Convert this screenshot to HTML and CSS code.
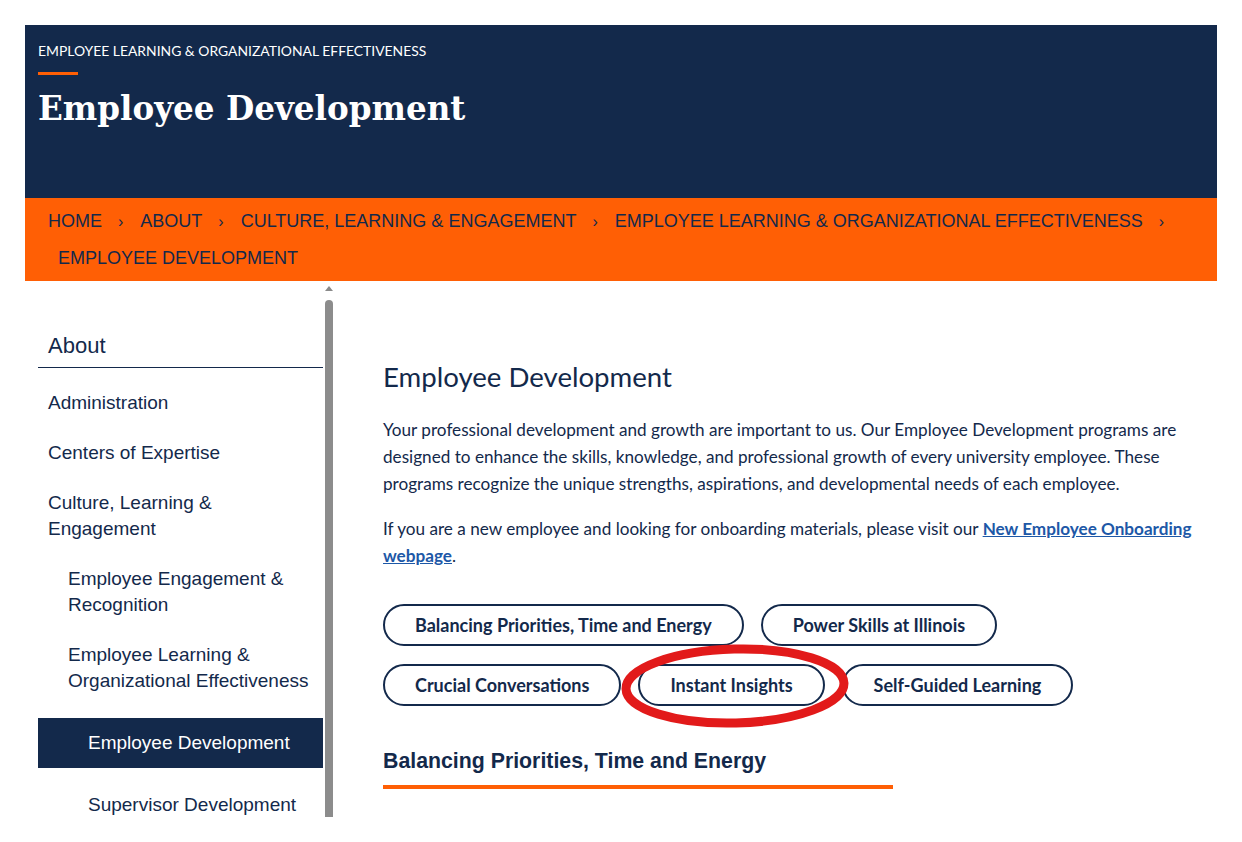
FILE: index.html
```html
<!DOCTYPE html>
<html lang="en">
<head>
<meta charset="utf-8">
<title>Employee Development</title>
<link rel="stylesheet" href="styles.css">
</head>
<body>
<div class="page">
  <header class="banner">
    <div class="eyebrow">EMPLOYEE LEARNING &amp; ORGANIZATIONAL EFFECTIVENESS</div>
    <h1 class="title">Employee Development</h1>
  </header>
  <nav class="crumbs">
    <ol class="crumb-list">
      <li class="crumb sep">HOME</li>
      <li class="crumb sep">ABOUT</li>
      <li class="crumb sep">CULTURE, LEARNING &amp; ENGAGEMENT</li>
      <li class="crumb sep">EMPLOYEE LEARNING &amp; ORGANIZATIONAL EFFECTIVENESS</li>
      <li class="crumb">EMPLOYEE DEVELOPMENT</li>
    </ol>
  </nav>
  <div class="body">
    <aside class="sidebar">
      <div class="side-nav">
        <div class="side-title">About</div>
        <ul class="side-list">
          <li class="side-item">Administration</li>
          <li class="side-item">Centers of Expertise</li>
          <li class="side-item">Culture, Learning &amp;<br>Engagement</li>
          <li class="side-item lvl2">Employee Engagement &amp;<br>Recognition</li>
          <li class="side-item lvl2">Employee Learning &amp;<br>Organizational Effectiveness</li>
          <li class="side-item lvl3 active">Employee Development</li>
          <li class="side-item lvl3">Supervisor Development</li>
        </ul>
      </div>
      <div class="scrollbar">
        <div class="scroll-arrow"></div>
        <div class="scroll-thumb"></div>
      </div>
    </aside>
    <main class="main">
      <h2 class="page-heading">Employee Development</h2>
      <p class="para">Your professional development and growth are important to us. Our Employee Development programs are designed to enhance the skills, knowledge, and professional growth of every university employee. These programs recognize the unique strengths, aspirations, and developmental needs of each employee.</p>
      <p class="para second">If you are a new employee and looking for onboarding materials, please visit our <a class="link" href="#">New Employee Onboarding webpage</a>.</p>
      <div class="pills">
        <span class="pill">Balancing Priorities, Time and Energy</span>
        <span class="pill">Power Skills at Illinois</span>
        <span class="pill">Crucial Conversations</span>
        <span class="pill circled">Instant Insights
          <svg class="ring" width="236" height="90" viewBox="0 0 236 90"><ellipse cx="117" cy="44" rx="109" ry="37" fill="none" stroke="#e21a1a" stroke-width="9" transform="rotate(-1.5 117 44)"/></svg>
        </span>
        <span class="pill">Self-Guided Learning</span>
      </div>
      <h3 class="section-heading">Balancing Priorities, Time and Energy</h3>
    </main>
  </div>
</div>
</body>
</html>
```
FILE: styles.css
```css
* { box-sizing: border-box; }
body {
  margin: 0;
  background: #fff;
  color: #13294b;
  font-family: "Liberation Sans", Arial, sans-serif;
}
.page {
  padding: 25px 25px 0 25px;
  width: 1242px;
}
.banner {
  background: #13294b;
  height: 173px;
  padding: 17px 13px 0 13px;
}
.eyebrow {
  font-family: Lato, "Open Sans", sans-serif;
  font-size: 13.9px;
  color: #fff;
  line-height: 16px;
  display: inline-block;
  position: relative;
  padding-bottom: 16px;
}
.eyebrow::after {
  content: "";
  position: absolute;
  left: 0;
  bottom: 0;
  width: 40px;
  height: 3px;
  background: #ff5f05;
}
.title {
  margin: 14px 0 0 0;
  font-family: "DejaVu Serif", Georgia, serif;
  font-weight: bold;
  font-size: 32.6px;
  line-height: 40px;
  color: #fff;
}
.crumbs {
  background: #ff5f05;
  height: 83px;
  padding: 5px 20px 0 23px;
}
.crumb-list {
  list-style: none;
  margin: 0;
  padding: 0;
  display: flex;
  flex-wrap: wrap;
}
.crumb {
  font-size: 18px;
  line-height: 36px;
  color: #13294b;
  margin-left: 10px;
}
.crumb:first-child { margin-left: 0; }
.crumb.sep::after {
  content: "\203A";
  display: inline-block;
  padding: 0 7px 0 16px;
  font-size: 16px;
}
.body {
  display: flex;
}
.sidebar {
  width: 310px;
  display: flex;
  flex: none;
  height: 536px;
}
.side-nav {
  width: 298px;
  padding: 50px 0 0 13px;
}
.side-title {
  font-size: 22px;
  line-height: 30px;
  padding: 0 0 6px 10px;
  border-bottom: 1px solid #13294b;
}
.side-list {
  list-style: none;
  margin: 10px 0 0 0;
  padding: 0;
}
.side-item {
  font-size: 19px;
  line-height: 26px;
  padding: 12px 0 12px 10px;
}
.side-item.lvl2 { padding-left: 30px; }
.side-item.lvl3 { padding-left: 50px; margin-top: 12px; }
.side-item.active {
  background: #13294b;
  color: #fff;
}
.scrollbar {
  width: 12px;
  padding-top: 5px;
  display: flex;
  flex-direction: column;
  align-items: center;
}
.scroll-arrow {
  width: 0;
  height: 0;
  border-left: 4px solid transparent;
  border-right: 4px solid transparent;
  border-bottom: 5px solid #8a8a8a;
}
.scroll-thumb {
  margin-top: 9px;
  width: 8px;
  flex: 1;
  background: #8c8c8c;
  border-radius: 4px 4px 0 0;
}
.main {
  padding: 78px 0 0 48px;
  width: 870px;
  font-family: Lato, "Open Sans", sans-serif;
}
.page-heading {
  margin: 0;
  font-weight: normal;
  font-size: 27.6px;
  line-height: 36px;
}
.para {
  margin: 21px 0 0 0;
  font-size: 17.15px;
  line-height: 27px;
  width: 822px;
}
.para.second { margin-top: 18px; }
.link {
  color: #1d58a7;
  font-weight: bold;
  text-decoration: underline;
}
.pills {
  margin-top: 35px;
  display: flex;
  flex-wrap: wrap;
  gap: 18px 17px;
  width: 700px;
}
.pill {
  display: inline-flex;
  align-items: center;
  height: 42px;
  padding: 0 30px;
  border: 2px solid #13294b;
  border-radius: 21px;
  font-size: 18px;
  font-weight: bold;
  white-space: nowrap;
}
.pill.circled { position: relative; }
.ring {
  position: absolute;
  left: -22px;
  top: -24px;
}
.section-heading {
  margin: 43px 0 0 0;
  font-family: "Liberation Sans", Arial, sans-serif;
  font-size: 21.3px;
  line-height: 24px;
  padding-bottom: 12px;
  width: 510px;
  border-bottom: 4px solid #ff5f05;
}
```
